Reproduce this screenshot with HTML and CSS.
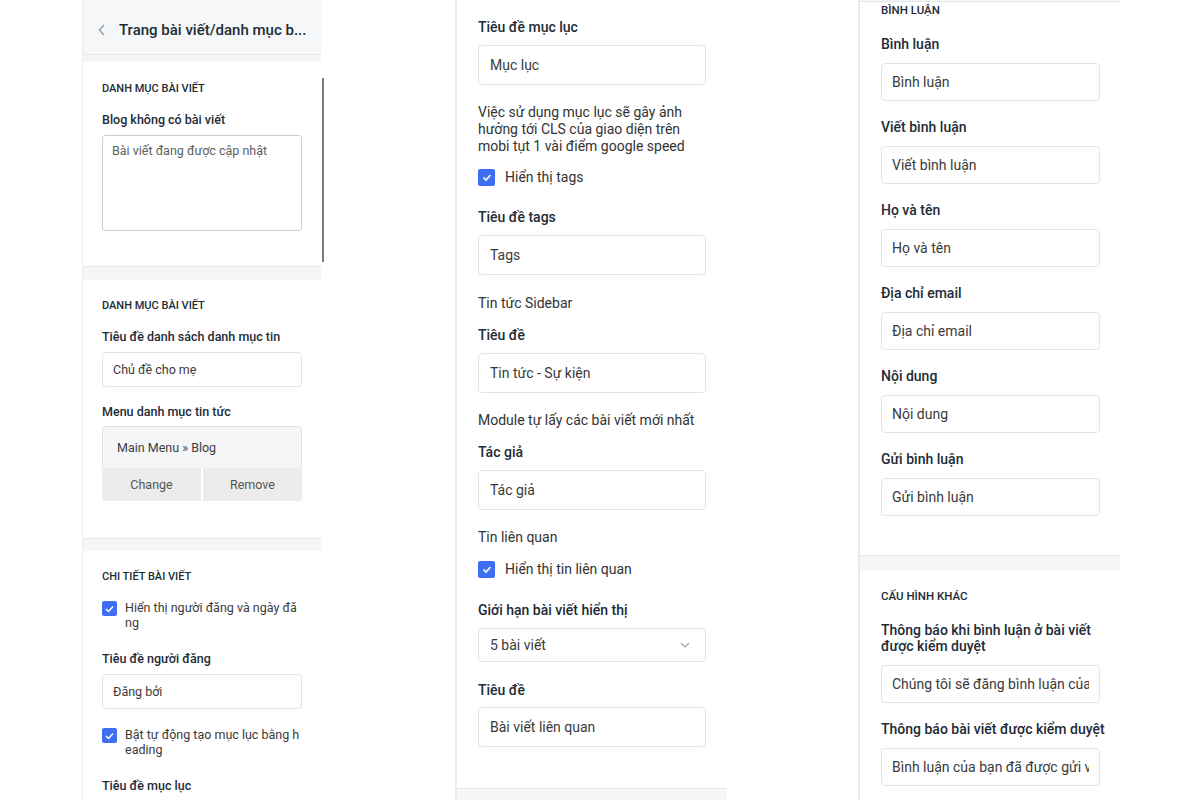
FILE: index.html
```html
<!doctype html>
<html lang="vi">
<head>
    <meta charset="utf-8">
    <meta name="viewport" content="width=device-width, initial-scale=1">
    <title>Cài đặt bài viết</title>
    <link rel="stylesheet" href="styles.css">
</head>
<body>

    <div class="board">

        <!-- cot 1: sidebar trang bai viet -->
        <div class="panel-a">
            <div class="pa-main">
                <div class="pa-header">
                    <svg class="back" width="8" height="12" viewBox="0 0 8 12"><polyline points="6,1 1.5,6 6,11" fill="none" stroke="#9aa3ad" stroke-width="1.6"/></svg>
                    <span class="pa-title">Trang bài viết/danh mục b...</span>
                </div>

                <div class="card card-1">
                    <div class="sec-title">Danh mục bài viết</div>
                    <label class="lbl">Blog không có bài viết</label>
                    <div class="textarea">Bài viết đang được cập nhật</div>
                </div>

                <div class="card card-2">
                    <div class="sec-title">Danh mục bài viết</div>
                    <label class="lbl">Tiêu đề danh sách danh mục tin</label>
                    <div class="input small"><span class="val">Chủ đề cho mẹ</span></div>
                    <label class="lbl">Menu danh mục tin tức</label>
                    <div class="picker">
                        <div class="picker-value">Main Menu » Blog</div>
                        <div class="picker-btns">
                            <span class="pbtn">Change</span>
                            <span class="pbtn">Remove</span>
                        </div>
                    </div>
                </div>

                <div class="card card-3">
                    <div class="sec-title">Chi tiết bài viết</div>
                    <div class="check small-check">
                        <span class="box"><svg width="9" height="8" viewBox="0 0 9 8"><polyline points="1,4 3.5,6.5 8,1.5" fill="none" stroke="#fff" stroke-width="1.5"/></svg></span>
                        <span class="check-text">Hiển thị người đăng và ngày đăng</span>
                    </div>
                    <label class="lbl">Tiêu đề người đăng</label>
                    <div class="input small"><span class="val">Đăng bởi</span></div>
                    <div class="check small-check">
                        <span class="box"><svg width="9" height="8" viewBox="0 0 9 8"><polyline points="1,4 3.5,6.5 8,1.5" fill="none" stroke="#fff" stroke-width="1.5"/></svg></span>
                        <span class="check-text">Bật tự động tạo mục lục bằng heading</span>
                    </div>
                    <label class="lbl">Tiêu đề mục lục</label>
                </div>
            </div>
            <div class="track"><div class="thumb"></div></div>
        </div>

        <!-- cot 2: muc luc, tags, tin lien quan -->
        <div class="panel-b">
            <div class="pb-card">
                <div class="field">
                    <label class="lbl">Tiêu đề mục lục</label>
                    <div class="input"><span class="val">Mục lục</span></div>
                </div>
                <p class="note long">Việc sử dụng mục lục sẽ gây ảnh hưởng tới CLS của giao diện trên mobi tụt 1 vài điểm google speed</p>
                <div class="check first">
                    <span class="box"><svg width="10" height="9" viewBox="0 0 10 9"><polyline points="1.5,4.5 4,7 8.5,2" fill="none" stroke="#fff" stroke-width="1.6"/></svg></span>
                    <span class="check-text">Hiển thị tags</span>
                </div>
                <div class="field tags">
                    <label class="lbl">Tiêu đề tags</label>
                    <div class="input"><span class="val">Tags</span></div>
                </div>
                <p class="note">Tin tức Sidebar</p>
                <div class="field">
                    <label class="lbl">Tiêu đề</label>
                    <div class="input"><span class="val">Tin tức - Sự kiện</span></div>
                </div>
                <p class="note">Module tự lấy các bài viết mới nhất</p>
                <div class="field">
                    <label class="lbl">Tác giả</label>
                    <div class="input"><span class="val">Tác giả</span></div>
                </div>
                <p class="note">Tin liên quan</p>
                <div class="check">
                    <span class="box"><svg width="10" height="9" viewBox="0 0 10 9"><polyline points="1.5,4.5 4,7 8.5,2" fill="none" stroke="#fff" stroke-width="1.6"/></svg></span>
                    <span class="check-text">Hiển thị tin liên quan</span>
                </div>
                <div class="field">
                    <label class="lbl">Giới hạn bài viết hiển thị</label>
                    <div class="select">
                        <span>5 bài viết</span>
                        <svg width="10" height="6" viewBox="0 0 10 6"><polyline points="1,1 5,5 9,1" fill="none" stroke="#9aa3ad" stroke-width="1.2"/></svg>
                    </div>
                </div>
                <div class="field last">
                    <label class="lbl">Tiêu đề</label>
                    <div class="input"><span class="val">Bài viết liên quan</span></div>
                </div>
            </div>
            <div class="pb-foot"></div>
        </div>

        <!-- cot 3: binh luan -->
        <div class="panel-c">
            <div class="pc-card pc-top">
                <div class="sec-title">Bình luận</div>
                <div class="field">
                    <label class="lbl">Bình luận</label>
                    <div class="input"><span class="val">Bình luận</span></div>
                </div>
                <div class="field">
                    <label class="lbl">Viết bình luận</label>
                    <div class="input"><span class="val">Viết bình luận</span></div>
                </div>
                <div class="field">
                    <label class="lbl">Họ và tên</label>
                    <div class="input"><span class="val">Họ và tên</span></div>
                </div>
                <div class="field">
                    <label class="lbl">Địa chỉ email</label>
                    <div class="input"><span class="val">Địa chỉ email</span></div>
                </div>
                <div class="field">
                    <label class="lbl">Nội dung</label>
                    <div class="input"><span class="val">Nội dung</span></div>
                </div>
                <div class="field last">
                    <label class="lbl">Gửi bình luận</label>
                    <div class="input"><span class="val">Gửi bình luận</span></div>
                </div>
            </div>
            <div class="pc-card pc-other">
                <div class="sec-title">Cấu hình khác</div>
                <div class="field">
                    <label class="lbl">Thông báo khi bình luận ở bài viết được kiểm duyệt</label>
                    <div class="input"><span class="val">Chúng tôi sẽ đăng bình luận của bạn sau khi kiểm duyệt</span></div>
                </div>
                <div class="field">
                    <label class="lbl wide">Thông báo bài viết được kiểm duyệt</label>
                    <div class="input"><span class="val">Bình luận của bạn đã được gửi và đang chờ duyệt</span></div>
                </div>
            </div>
        </div>

    </div>

</body>
</html>
```

FILE: styles.css
```css
body {
    margin: 0;
    font-family: Roboto, "Liberation Sans", sans-serif;
    color: #212b36;
    background: #fff;
}

.board {
    display: flex;
    align-items: flex-start;
    height: 800px;
    overflow: hidden;
    padding-left: 82px;
}

/* ---------- cot 1 ---------- */
.panel-a {
    display: flex;
    width: 242px;
    height: 800px;
    border-left: 1px solid #eceef0;
}

.pa-main {
    width: 238px;
    height: 800px;
    background: #f4f6f8;
    overflow: hidden;
}

.pa-header {
    display: flex;
    align-items: center;
    height: 49px;
    padding: 5px 0 0 15px;
    background: #f6f7f9;
    border-bottom: 1px solid #e4e7eb;
    margin-bottom: 7px;
}

.back {
    margin-right: 13px;
}

.pa-title {
    font-size: 15px;
    font-weight: 500;
    color: #212b36;
    white-space: nowrap;
}

.card {
    background: #fff;
    padding: 20px 19px 0 19px;
    border-bottom: 1px solid #e6e8eb;
}

.card-1 {
    padding-bottom: 35px;
    margin-bottom: 13px;
}

.card-2 {
    padding-top: 19px;
    padding-bottom: 37px;
    margin-bottom: 12px;
}

.card-3 {
    padding-top: 19px;
    height: 240px;
}

.sec-title {
    font-size: 11px;
    line-height: 14px;
    font-weight: 500;
    text-transform: uppercase;
    color: #212b36;
    margin-bottom: 16px;
}

.panel-a .lbl {
    display: block;
    font-size: 12.5px;
    line-height: 16px;
    font-weight: 500;
    margin-bottom: 7px;
}

.card-2 .input + .lbl {
    margin-top: 1px;
    margin-bottom: 6px;
}

.textarea {
    height: 96px;
    box-sizing: border-box;
    padding: 7px 9px;
    border: 1px solid #c9cfd6;
    border-radius: 3px;
    font-size: 12.5px;
    color: #5c5f62;
}

.input.small {
    height: 35px;
    padding: 0 10px;
    font-size: 12.5px;
    margin-bottom: 17px;
}

.card-3 .input.small {
    margin-bottom: 18px;
}

.picker {
    border-radius: 3px;
    overflow: hidden;
}

.picker-value {
    height: 41px;
    padding-left: 14px;
    display: flex;
    align-items: center;
    font-size: 12.5px;
    color: #3d3d3d;
    background: #f4f6f8;
    border: 1px solid #dfe3e8;
    border-bottom: none;
    border-radius: 3px 3px 0 0;
}

.picker-btns {
    display: flex;
    gap: 2px;
}

.pbtn {
    flex: 1;
    height: 33px;
    display: flex;
    align-items: center;
    justify-content: center;
    background: #ececec;
    font-size: 12.5px;
    color: #555;
}

.check.small-check {
    margin-bottom: 21px;
    align-items: flex-start;
}

.small-check .box {
    width: 15px;
    height: 15px;
    margin-top: 1px;
    margin-right: 8px;
}

.small-check .check-text {
    width: 177px;
    font-size: 12.5px;
    line-height: 15px;
    word-break: break-all;
    color: #3a3a3a;
}

.track {
    width: 4px;
    height: 800px;
    background: #fff;
}

.thumb {
    width: 2px;
    height: 184px;
    margin: 78px 0 0 1px;
    background: #7c7c7c;
}

/* ---------- chung ---------- */
.input {
    display: flex;
    align-items: center;
    height: 40px;
    box-sizing: border-box;
    padding: 0 11px;
    border: 1px solid #e1e4e8;
    border-radius: 4px;
    font-size: 14px;
    color: #3a3a3a;
}

.val {
    display: block;
    flex: 1;
    min-width: 0;
    white-space: nowrap;
    overflow: hidden;
}

.check {
    display: flex;
    align-items: center;
}

.box {
    display: flex;
    align-items: center;
    justify-content: center;
    flex-shrink: 0;
    width: 16px;
    height: 16px;
    margin-right: 10px;
    background: #3e6ef3;
    border-radius: 2px;
}

.check-text {
    font-size: 14px;
    line-height: 18px;
    color: #333;
}

/* ---------- cot 2 ---------- */
.panel-b {
    width: 270px;
    height: 800px;
    margin-left: 130px;
    border-left: 2px solid #e8eaec;
    background: #fff;
}

.pb-card {
    padding: 18px 21px 41px 21px;
    border-bottom: 1px solid #e4e6e9;
}

.panel-b .lbl,
.panel-c .lbl {
    display: block;
    font-size: 14px;
    line-height: 18px;
    font-weight: 500;
    color: #212b36;
    margin-bottom: 9px;
}

.panel-b .field {
    margin-bottom: 19px;
}

.panel-b .field.tags {
    margin-bottom: 20px;
}

.panel-b .field.last {
    margin-bottom: 0;
}

.panel-b .field.last .lbl {
    margin-bottom: 8px;
}

.note {
    margin: 0 0 14px 0;
    font-size: 14px;
    line-height: 17px;
    color: #333;
}

.note.long {
    margin-bottom: 13px;
}

.panel-b .check {
    margin-bottom: 23px;
}

.panel-b .check.first {
    margin-bottom: 22px;
}

.note + .check {
    margin-top: 1px;
}

.note.long + .check {
    margin-top: 0;
}

.panel-b .check .box {
    width: 17px;
    height: 17px;
}

.select {
    display: flex;
    align-items: center;
    justify-content: space-between;
    height: 34px;
    box-sizing: border-box;
    padding: 0 15px 0 11px;
    border: 1px solid #e1e4e8;
    border-radius: 4px;
    font-size: 14px;
    color: #3a3a3a;
}

.pb-foot {
    height: 20px;
    background: #f4f6f8;
}

/* ---------- cot 3 ---------- */
.panel-c {
    width: 260px;
    height: 800px;
    margin-left: 131px;
    border-left: 2px solid #e8eaec;
    background: #f4f6f8;
}

.pc-card {
    background: #fff;
    padding: 0 20px 0 21px;
}

.pc-top {
    margin-top: 1px;
    padding-top: 1px;
    padding-bottom: 39px;
    border-top: 1px solid #e1e4e8;
    border-bottom: 1px solid #e4e6e9;
}

.pc-other {
    margin-top: 14px;
    padding-top: 19px;
    height: 230px;
}

.panel-c .sec-title {
    font-size: 11.5px;
    margin-bottom: 19px;
}

.panel-c .field {
    margin-bottom: 18px;
}

.panel-c .field.last {
    margin-bottom: 0;
}

.panel-c .lbl {
    line-height: 16px;
    margin-bottom: 11px;
}

.panel-c .lbl.wide {
    margin-right: -12px;
    white-space: nowrap;
}

.panel-c .input {
    height: 38px;
    padding: 0 10px;
}
```
